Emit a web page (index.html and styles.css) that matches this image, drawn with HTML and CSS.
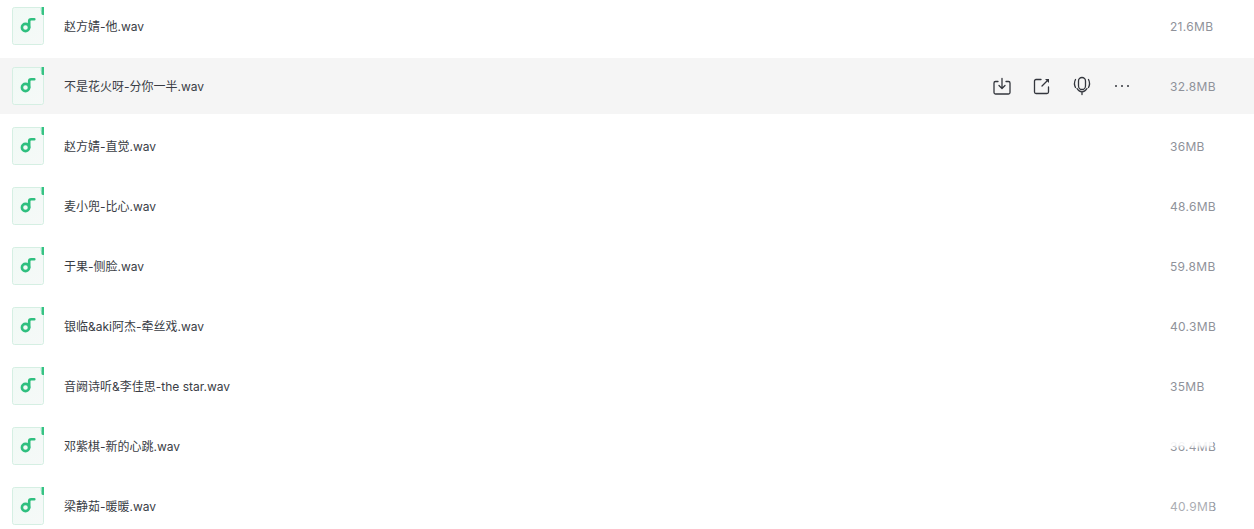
FILE: index.html
```html
<!DOCTYPE html>
<html lang="en">
<head>
    <meta charset="UTF-8">
    <meta name="viewport" content="width=device-width, initial-scale=1.0">
    <title>Files</title>
    <link rel="stylesheet" href="styles.css">
</head>
<body>
    <svg class="defs" width="0" height="0" aria-hidden="true">
        <symbol id="file-audio" viewBox="0 0 32 38">
            <path d="M2.500 .5H28.500V2.500A2 2 0 0 0 30.500 4.500H31.500V35.500A2 2 0 0 1 29.500 37.500H2.500A2 2 0 0 1 .5 35.500V2.500A2 2 0 0 1 2.500 .5Z" fill="url(#file-bg)" stroke="#d5efe3"/>
            <path d="M29.500 0H32V8H31A1.500 1.500 0 0 1 29.500 6.500Z" fill="#36c384"/>
            <path d="M17.200 20.500V14C17.200 12.600 18 12.200 19.200 12.200H22.300" fill="none" stroke="#2fbf7f" stroke-width="2.600" stroke-linecap="round"/>
            <circle cx="13.500" cy="20.500" r="3.600" fill="none" stroke="#2fbf7f" stroke-width="2.600"/>
        </symbol>
        <linearGradient id="file-bg" x1="0" y1="0" x2="1" y2="1">
            <stop offset="0" stop-color="#f0faf5"/>
            <stop offset="1" stop-color="#f6f9f8"/>
        </linearGradient>
    </svg>

    <div class="file-list">
        <div class="file-row">
            <svg class="file-icon"><use href="#file-audio"/></svg>
            <span class="file-name">赵方婧-他.wav</span>
            <span class="file-size">21.6MB</span>
        </div>
        <div class="file-row active">
            <svg class="file-icon"><use href="#file-audio"/></svg>
            <span class="file-name">不是花火呀-分你一半.wav</span>
            <div class="file-actions">
                <svg class="action" viewBox="0 0 20 20">
                    <path d="M6 5.500H3.500A1.500 1.500 0 0 0 2 7V16.500A1.500 1.500 0 0 0 3.500 18H16.500A1.500 1.500 0 0 0 18 16.500V7A1.500 1.500 0 0 0 16.500 5.500H14"/>
                    <path d="M10 2.500V12M7 9.500L10 12.500L13 9.500"/>
                </svg>
                <svg class="action" viewBox="0 0 20 20">
                    <path d="M9 3.500H4A1.500 1.500 0 0 0 2.500 5V16A1.500 1.500 0 0 0 4 17.500H15A1.500 1.500 0 0 0 16.500 16V11"/>
                    <path d="M10 10L15.500 4.500"/>
                    <path class="solid" d="M13 3H17V7Z"/>
                </svg>
                <svg class="action" viewBox="0 0 20 20">
                    <rect x="6.500" y="1.500" width="7" height="12" rx="3.500"/>
                    <path d="M3.500 3.500C2.200 6 2.200 9 3.500 11.500M16.500 3.500C17.800 6 17.800 9 16.500 11.500M5 12.500C6.300 14.800 8 15.800 10 15.800C12 15.800 13.700 14.800 15 12.500M10 15.800V18.500"/>
                </svg>
                <svg class="action" viewBox="0 0 20 20">
                    <circle class="dot" cx="4" cy="10" r="1"/>
                    <circle class="dot" cx="10" cy="10" r="1"/>
                    <circle class="dot" cx="16" cy="10" r="1"/>
                </svg>
            </div>
            <span class="file-size">32.8MB</span>
        </div>
        <div class="file-row">
            <svg class="file-icon"><use href="#file-audio"/></svg>
            <span class="file-name">赵方婧-直觉.wav</span>
            <span class="file-size">36MB</span>
        </div>
        <div class="file-row">
            <svg class="file-icon"><use href="#file-audio"/></svg>
            <span class="file-name">麦小兜-比心.wav</span>
            <span class="file-size">48.6MB</span>
        </div>
        <div class="file-row">
            <svg class="file-icon"><use href="#file-audio"/></svg>
            <span class="file-name">于果-侧脸.wav</span>
            <span class="file-size">59.8MB</span>
        </div>
        <div class="file-row">
            <svg class="file-icon"><use href="#file-audio"/></svg>
            <span class="file-name">银临&amp;aki阿杰-牵丝戏.wav</span>
            <span class="file-size">40.3MB</span>
        </div>
        <div class="file-row">
            <svg class="file-icon"><use href="#file-audio"/></svg>
            <span class="file-name">音阙诗听&amp;李佳思-the star.wav</span>
            <span class="file-size">35MB</span>
        </div>
        <div class="file-row">
            <svg class="file-icon"><use href="#file-audio"/></svg>
            <span class="file-name">邓紫棋-新的心跳.wav</span>
            <span class="file-size size-faded">36.4MB</span>
        </div>
        <div class="file-row">
            <svg class="file-icon"><use href="#file-audio"/></svg>
            <span class="file-name">梁静茹-暖暖.wav</span>
            <span class="file-size size-faded-light">40.9MB</span>
        </div>
    </div>
</body>
</html>
```

FILE: styles.css
```css
html, body {
    height: 100%;
}
body {
    margin: 0;
    background-color: #fff;
    font-family: Inter, "Noto Sans CJK SC", sans-serif;
    overflow: hidden;
}
.defs {
    display: block;
    height: 0;
}
.file-list {
    display: flex;
    flex-direction: column;
    gap: 4px;
    margin-top: -2px;
}
.file-row {
    display: flex;
    align-items: center;
    flex: 0 0 56px;
    height: 56px;
    padding-left: 12px;
    padding-right: 41px;
}
.file-row.active {
    background-color: #f5f5f5;
}
.file-icon {
    flex: none;
    width: 32px;
    height: 38px;
    margin-right: 20px;
}
.file-name {
    flex: 1;
    padding-bottom: 2px;
    font-size: 12px;
    color: #3a3d45;
}
.file-actions {
    display: flex;
    align-items: center;
    gap: 20px;
    margin-right: 38px;
}
.action {
    width: 20px;
    height: 20px;
    fill: none;
    stroke: #33363d;
    stroke-width: 1.300;
    stroke-linecap: round;
    stroke-linejoin: round;
}
.action .dot {
    fill: #33363d;
    stroke: none;
}
.action .solid {
    fill: #33363d;
    stroke: none;
}
.file-size {
    flex: none;
    position: relative;
    width: 43px;
    white-space: nowrap;
    font-size: 12px;
    letter-spacing: 0.3px;
    color: #8f929a;
}
/* white fade from the footer bar sits over the last sizes */
.size-faded::after {
    content: "";
    position: absolute;
    inset: 0;
    background: linear-gradient(to bottom, rgba(255,255,255,0.9) 40%, rgba(255,255,255,0) 65%);
}
.size-faded-light::after {
    content: "";
    position: absolute;
    inset: 0;
    background: rgba(255,255,255,0.25);
}
```
